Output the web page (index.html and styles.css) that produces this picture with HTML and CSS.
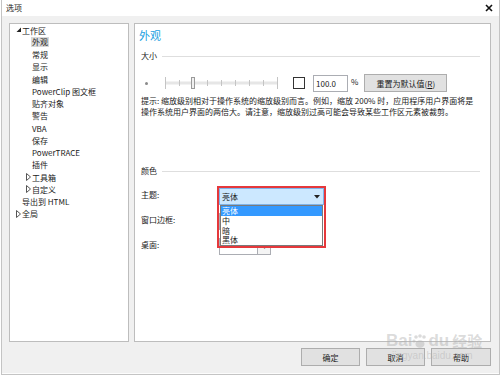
FILE: index.html
```html
<!DOCTYPE html>
<html lang="zh-CN">
<head>
    <meta charset="UTF-8">
    <meta name="viewport" content="width=device-width, initial-scale=1.0">
    <title>选项</title>
    <link rel="stylesheet" href="styles.css">
</head>
<body>
<div class="window">
    <div class="titlebar">
        <span class="title">选项</span>
        <svg class="close" width="8" height="8" viewBox="0 0 8 8">
            <path d="M1 1 L7 7 M7 1 L1 7" stroke="#111" stroke-width="1.6" fill="none"/>
        </svg>
    </div>

    <div class="main">
        <div class="panes">
            <!-- left tree -->
            <ul class="tree">
                <li class="row lv0">
                    <svg class="tog" width="6" height="6" viewBox="0 0 6 6"><polygon points="5,0.5 5,5 0.5,5" fill="#222"/></svg>
                    <span>工作区</span>
                </li>
                <li class="row lv1"><span class="tog"></span><span class="sel">外观</span></li>
                <li class="row lv1"><span class="tog"></span><span>常规</span></li>
                <li class="row lv1"><span class="tog"></span><span>显示</span></li>
                <li class="row lv1"><span class="tog"></span><span>编辑</span></li>
                <li class="row lv1"><span class="tog"></span><span>PowerClip 图文框</span></li>
                <li class="row lv1"><span class="tog"></span><span>贴齐对象</span></li>
                <li class="row lv1"><span class="tog"></span><span>警告</span></li>
                <li class="row lv1"><span class="tog"></span><span>VBA</span></li>
                <li class="row lv1"><span class="tog"></span><span>保存</span></li>
                <li class="row lv1"><span class="tog"></span><span>PowerTRACE</span></li>
                <li class="row lv1"><span class="tog"></span><span>插件</span></li>
                <li class="row lv1">
                    <svg class="tog" width="6" height="8" viewBox="0 0 6 8"><polygon points="0.5,0.5 4.5,4 0.5,7.5" fill="none" stroke="#555" stroke-width="1"/></svg>
                    <span>工具箱</span>
                </li>
                <li class="row lv1">
                    <svg class="tog" width="6" height="8" viewBox="0 0 6 8"><polygon points="0.5,0.5 4.5,4 0.5,7.5" fill="none" stroke="#555" stroke-width="1"/></svg>
                    <span>自定义</span>
                </li>
                <li class="row lv0"><span class="tog"></span><span>导出到 HTML</span></li>
                <li class="row lv0">
                    <svg class="tog" width="6" height="8" viewBox="0 0 6 8"><polygon points="0.5,0.5 4.5,4 0.5,7.5" fill="none" stroke="#555" stroke-width="1"/></svg>
                    <span>全局</span>
                </li>
            </ul>

            <!-- right content -->
            <div class="content">
                <div class="page-title">外观</div>

                <div class="group-head"><span>大小</span><span class="rule"></span></div>

                <div class="size-row">
                    <span class="dot"></span>
                    <svg class="slider" width="113" height="14" viewBox="0 0 113 14">
                        <rect x="0" y="5.5" width="113" height="3" fill="#e6e6e6"/>
                        <line x1="0.5" y1="1" x2="0.5" y2="13" stroke="#c4c4c4"/>
                        <line x1="14.5" y1="4" x2="14.5" y2="10" stroke="#c4c4c4"/>
                        <line x1="42.5" y1="4" x2="42.5" y2="10" stroke="#c4c4c4"/>
                        <line x1="56.5" y1="4" x2="56.5" y2="10" stroke="#c4c4c4"/>
                        <line x1="70.5" y1="4" x2="70.5" y2="10" stroke="#c4c4c4"/>
                        <line x1="84.5" y1="4" x2="84.5" y2="10" stroke="#c4c4c4"/>
                        <line x1="98.5" y1="4" x2="98.5" y2="10" stroke="#c4c4c4"/>
                        <line x1="112.5" y1="1" x2="112.5" y2="13" stroke="#c4c4c4"/>
                        <rect x="26.5" y="1.5" width="3" height="11" fill="#f0f0f0" stroke="#9a9a9a"/>
                    </svg>
                    <span class="check"></span>
                    <span class="num">100.0</span>
                    <span class="pct">%</span>
                    <span class="btn reset">重置为默认值(<u>R</u>)</span>
                </div>

                <p class="hint">提示: 缩放级别相对于操作系统的缩放级别而言。例如，缩放 200% 时，应用程序用户界面将是<br>操作系统用户界面的两倍大。请注意，缩放级别过高可能会导致某些工作区元素被裁剪。</p>

                <div class="group-head color-head"><span>颜色</span><span class="rule"></span></div>

                <div class="color-grid">
                    <span class="lbl">主题:</span>
                    <div class="combo-wrap">
                        <div class="combo open">
                            <span>亮体</span>
                            <svg width="6" height="4" viewBox="0 0 6 4"><polygon points="0,0 6,0 3,3.5" fill="#222"/></svg>
                        </div>
                        <ul class="droplist">
                            <li class="on">亮体</li>
                            <li>中</li>
                            <li>暗</li>
                            <li>黑体</li>
                        </ul>
                        <div class="mark"></div>
                    </div>

                    <span class="lbl">窗口边框:</span>
                    <div class="swatch"><span class="field"></span><span class="drop">▾</span></div>

                    <span class="lbl">桌面:</span>
                    <div class="swatch"><span class="field"></span><span class="drop">▾</span></div>
                </div>
            </div>
        </div>

        <div class="buttons">
            <span class="btn">确定</span>
            <span class="btn">取消</span>
            <span class="btn wide">帮助</span>
        </div>
    </div>

    <div class="watermark">
        <div class="wm-top">Bai<svg width="16" height="15" viewBox="0 0 16 15"><circle cx="4" cy="3" r="1.8"/><circle cx="8" cy="2" r="1.8"/><circle cx="12" cy="3" r="1.8"/><circle cx="2" cy="7" r="1.6"/><ellipse cx="8" cy="10" rx="4.5" ry="3.8"/></svg>du<span class="wm-cn">经验</span></div>
        <div class="wm-url">jingyan.baidu.com</div>
    </div>
</div>
</body>
</html>
```

FILE: styles.css
```css
* {
    box-sizing: border-box;
}
html, body {
    margin: 0;
    padding: 0;
}
body {
    width: 500px;
    height: 376px;
    overflow: hidden;
    background: #fff;
    font-family: "Noto Sans CJK SC", "Noto Sans", sans-serif;
    font-size: 8px;
    color: #1a1a1a;
}

.window {
    position: relative;
    width: 499px;
    height: 375px;
    margin-left: 1px;
    border: 1px solid #c4c4c4;
    border-top: none;
    display: flex;
    flex-direction: column;
}

.titlebar {
    height: 16px;
    background: #fff;
    display: flex;
    align-items: center;
    padding-left: 4px;
}
.title {
    line-height: 16px;
}
.close {
    margin-left: auto;
    margin-right: 6px;
}

.main {
    flex: 1;
    background: #f0f0f0;
    padding: 7px 8px 0 7px;
    border-bottom: 1px solid #fcfcfc;
}
.panes {
    display: flex;
    gap: 5px;
    height: 319px;
}

/* tree */
.tree {
    width: 120px;
    margin: 0;
    padding: 0;
    list-style: none;
    background: #fff;
    border: 1px solid #bdbdbd;
}
.row {
    display: flex;
    align-items: center;
    height: 12.25px;
    white-space: nowrap;
}
.lv0 {
    padding-left: 6px;
}
.lv1 {
    padding-left: 16px;
}
.tog {
    display: inline-block;
    width: 6px;
    flex: none;
}
.sel {
    background: #d9d9d9;
    line-height: 10px;
    padding: 0 1px;
    margin-left: -1px;
}

/* content */
.content {
    flex: 1;
    background: #fff;
    border: 1px solid #bdbdbd;
    padding: 4px 10px 0 4px;
    position: relative;
}
.page-title {
    font-size: 11px;
    line-height: 14px;
    color: #1ba1e2;
}
.group-head {
    display: flex;
    align-items: center;
    margin-top: 8px;
    padding-left: 2px;
    line-height: 12px;
}
.rule {
    flex: 1;
    margin-left: 5px;
    border-top: 1px solid #dedede;
}

.size-row {
    display: flex;
    align-items: center;
    height: 18px;
    margin-top: 12px;
}
.dot {
    width: 3px;
    height: 3px;
    border-radius: 50%;
    background: #8a8a8a;
    margin-left: 6px;
}
.slider {
    margin-left: 17px;
}
.check {
    width: 12px;
    height: 12px;
    margin-left: 15px;
    border: 1px solid #333;
    background: #fff;
}
.num {
    width: 35px;
    height: 17px;
    margin-left: 8px;
    border: 1px solid #abadb3;
    padding-left: 2px;
    line-height: 15px;
}
.pct {
    margin-left: 3px;
    margin-bottom: 3px;
}
.btn {
    display: inline-flex;
    align-items: center;
    justify-content: center;
    height: 18px;
    width: 59px;
    background: #e1e1e1;
    border: 1px solid #adadad;
}
.reset {
    width: 83px;
    margin-left: 6px;
}

.hint {
    margin: 4px 0 0;
    padding-left: 2px;
    line-height: 10.6px;
    white-space: nowrap;
}

.color-head {
    margin-top: 48px;
}
.color-grid {
    display: grid;
    grid-template-columns: 80px auto;
    row-gap: 8px;
    margin-top: 11px;
    justify-items: start;
}
.lbl {
    padding-left: 2px;
    line-height: 14px;
    height: 17px;
}
.combo-wrap {
    position: relative;
}
.combo {
    width: 105px;
    height: 17px;
    display: flex;
    align-items: center;
    justify-content: space-between;
    padding: 0 3px 0 2px;
    border: 1px solid #7eb4ea;
    background: #cce8ff;
}
.droplist {
    position: absolute;
    left: 1px;
    top: 17px;
    width: 103px;
    margin: 0;
    padding: 0;
    list-style: none;
    background: #fff;
    border: 1px solid #7a7a7a;
    z-index: 2;
}
.droplist li {
    line-height: 9.75px;
    height: 9.75px;
    padding-left: 1px;
}
.droplist .on {
    background: #3399ff;
    color: #fff;
}
.mark {
    position: absolute;
    left: -2px;
    top: -2px;
    width: 109px;
    height: 62px;
    border: 2px solid #e5383b;
    z-index: 3;
}

.swatch {
    display: flex;
    width: 52px;
    height: 17px;
    border: 1px solid #abadb3;
    background: #fff;
}
.field {
    flex: 1;
}
.drop {
    width: 13px;
    border-left: 1px solid #abadb3;
    background: #f4f4f4;
    font-size: 6px;
    text-align: center;
    line-height: 15px;
}

.buttons {
    display: flex;
    justify-content: flex-end;
    gap: 6px;
    margin-top: 6px;
}
.wide {
    width: 60px;
}

/* watermark over the lower right corner */
.watermark {
    position: absolute;
    left: 384px;
    top: 332px;
    color: rgba(175, 175, 175, 0.45);
    fill: rgba(175, 175, 175, 0.45);
    font-family: "Liberation Sans", sans-serif;
    pointer-events: none;
}
.wm-top {
    display: flex;
    align-items: center;
    font-size: 17px;
    font-weight: bold;
    line-height: 18px;
}
.wm-cn {
    font-family: "Noto Sans CJK SC", sans-serif;
    font-size: 15px;
    margin-left: 3px;
}
.wm-url {
    font-size: 10px;
    margin-left: 6px;
    line-height: 12px;
}
```
